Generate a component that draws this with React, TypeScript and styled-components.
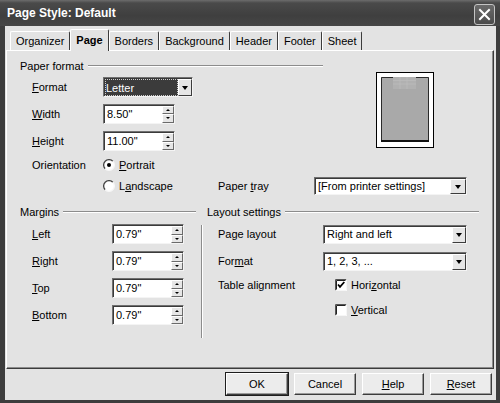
import React from 'react'
import styled, { createGlobalStyle } from 'styled-components'

const GlobalStyle = createGlobalStyle`
  html, body {
    margin: 0;
    padding: 0;
    background: #3d3d3d;
  }
  body {
    font-family: 'Liberation Sans', Arial, sans-serif;
    font-size: 11px;
    color: #000;
  }
  * {
    box-sizing: border-box;
  }
`

const Window = styled.div`
  width: 500px;
  height: 403px;
  display: flex;
  flex-direction: column;
  background: #3d3d3d;
`

const TitleBar = styled.div`
  height: 26px;
  flex: none;
  display: flex;
  align-items: center;
  justify-content: space-between;
  padding: 0 5px 0 7px;
  background: linear-gradient(to bottom, #6c6c6c 0, #4a4a4a 3px, #3f3f3f 60%, #464646 100%);
`

const Title = styled.span`
  font-family: 'Liberation Sans', Arial, sans-serif;
  font-weight: 700;
  font-size: 12px;
  color: #fff;
`

const CloseButton = styled.div`
  width: 21px;
  height: 21px;
  margin-top: 3px;
  border: 1px solid #c4c4c4;
  border-radius: 3px;
  background: linear-gradient(to bottom, #6a6a6a, #4c4c4c);
  display: flex;
  align-items: center;
  justify-content: center;
`

const Body = styled.div`
  flex: 1;
  display: flex;
  flex-direction: column;
  margin: 0 4px 3px 5px;
  background: #e3e3e3;
`

const TabStrip = styled.div`
  height: 24px;
  flex: none;
  display: flex;
  align-items: flex-end;
  padding-left: 5px;
  position: relative;
  z-index: 1;
`

const Tab = styled.div<{ $active?: boolean }>`
  height: ${(p) => (p.$active ? 22 : 19)}px;
  margin-bottom: ${(p) => (p.$active ? -1 : 0)}px;
  padding: 0 5px 1px;
  display: flex;
  align-items: center;
  font-weight: ${(p) => (p.$active ? 700 : 400)};
  background: #e3e3e3;
  border-top: 1px solid #fff;
  border-left: 1px solid #fff;
  border-right: 1px solid #3c3c3c;
  border-radius: 2px 2px 0 0;
  white-space: nowrap;
`

const Panel = styled.div`
  height: 319px;
  flex: none;
  margin: 0 2px 0 1px;
  padding: 8px 0 0 13px;
  border-top: 1px solid #fff;
  border-left: 1px solid #fff;
  border-right: 1px solid #3c3c3c;
  border-bottom: 1px solid #3c3c3c;
  box-shadow: inset -1px -1px 0 #8c8c8c;
`

const PaperTop = styled.div`
  display: flex;
  align-items: flex-start;
`

const Column = styled.div<{ $w: number }>`
  width: ${(p) => p.$w}px;
  flex: none;
  display: flex;
  flex-direction: column;
`

const GroupHeader = styled.div`
  height: 14px;
  display: flex;
  align-items: center;
  gap: 4px;
  white-space: nowrap;

  &::after {
    content: '';
    flex: 1;
    border-top: 1px solid #8c8c8c;
    border-bottom: 1px solid #fff;
  }
`

const Row = styled.div<{ $h?: number; $mt?: number; $indent?: number }>`
  display: flex;
  align-items: center;
  height: ${(p) => p.$h ?? 20}px;
  margin-top: ${(p) => p.$mt ?? 0}px;
  padding-left: ${(p) => p.$indent ?? 12}px;
`

const Label = styled.span<{ $w: number }>`
  width: ${(p) => p.$w}px;
  flex: none;
  white-space: nowrap;
`

const U = styled.span`
  text-decoration: underline;
  text-underline-offset: 1px;
`

const Field = styled.div<{ $w: number; $h?: number }>`
  width: ${(p) => p.$w}px;
  height: ${(p) => p.$h ?? 20}px;
  flex: none;
  display: flex;
  align-items: stretch;
  background: #fff;
  border: 1px solid;
  border-color: #707070 #f4f4f4 #f4f4f4 #707070;
  box-shadow: inset 1px 1px 0 #3a3a3a;
`

const FieldText = styled.div`
  flex: 1;
  display: flex;
  align-items: center;
  padding-left: 3px;
  color: #000;
  white-space: nowrap;
  overflow: hidden;
`

// the focused "Format" combo shows its value highlighted
const SelectedText = styled.div`
  flex: 1;
  display: flex;
  align-items: center;
  margin: 1px 0 0 1px;
  padding-left: 1px;
  background-color: #3b3b3b;
  outline: 1px dotted #cfcfcf;
  outline-offset: -1px;
  color: #ffffff;
  white-space: nowrap;
  overflow: hidden;
`

const DropButton = styled.div<{ $w?: number }>`
  width: ${(p) => p.$w ?? 14}px;
  flex: none;
  margin: 1px 0 0;
  display: flex;
  align-items: center;
  justify-content: center;
  background: #e6e6e6;
  border: 1px solid;
  border-color: #fff #3c3c3c #3c3c3c #fff;
`

const DownArrow = styled.span<{ $size?: number }>`
  width: 0;
  height: 0;
  border-left: ${(p) => p.$size ?? 3.5}px solid transparent;
  border-right: ${(p) => p.$size ?? 3.5}px solid transparent;
  border-top: ${(p) => (p.$size ?? 3.5) + 0.5}px solid #000;
`

const UpArrow = styled.span`
  width: 0;
  height: 0;
  border-left: 2px solid transparent;
  border-right: 2px solid transparent;
  border-bottom: 2px solid #000;
`

const Spin = styled.div`
  width: 12px;
  flex: none;
  margin-top: 1px;
  display: flex;
  flex-direction: column;
`

const SpinHalf = styled.div`
  flex: 1;
  display: flex;
  align-items: center;
  justify-content: center;
  background: #e6e6e6;
  border: 1px solid;
  border-color: #fff #6a6a6a #6a6a6a #fff;
`

const Option = styled.div<{ $w?: number }>`
  width: ${(p) => (p.$w ? `${p.$w}px` : 'auto')};
  flex: none;
  display: flex;
  align-items: center;
  gap: 4px;
  white-space: nowrap;
`

const Preview = styled.div`
  margin: 13px 0 0 53px;
  width: 58px;
  height: 76px;
  flex: none;
`

const Lower = styled.div`
  display: flex;
  align-items: flex-start;
  margin-top: 9px;
`

const Separator = styled.div`
  width: 2px;
  height: 113px;
  flex: none;
  margin: 20px 4px 0 5px;
  border-left: 1px solid #8c8c8c;
  border-right: 1px solid #fff;
`

const ButtonBar = styled.div`
  flex: 1;
  display: flex;
  justify-content: flex-end;
  align-items: flex-start;
  gap: 6px;
  padding: 4px 4px 0 0;
`

const Button = styled.button<{ $default?: boolean }>`
  width: 62px;
  height: 22px;
  padding: 0;
  font: inherit;
  color: #000;
  background: #ececec;
  border: 1px solid;
  border-color: #fff #3c3c3c #3c3c3c #fff;
  box-shadow: ${(p) =>
    p.$default ? '0 0 0 1px #1e1e1e, inset -1px -1px 0 #9a9a9a' : 'inset -1px -1px 0 #9a9a9a'};
`

const Radio = ({ checked }: { checked?: boolean }) => (
  <svg width="12" height="12" viewBox="0 0 12 12">
    <circle cx="6" cy="6" r="5.3" fill="#fff" />
    <path d="M2.2 9.8 A5.3 5.3 0 0 1 9.8 2.2" fill="none" stroke="#444" strokeWidth="1.3" />
    <path d="M9.8 2.2 A5.3 5.3 0 0 1 2.2 9.8" fill="none" stroke="#f6f6f6" strokeWidth="1.3" />
    {checked && <circle cx="6" cy="6" r="2" fill="#000" />}
  </svg>
)

const Checkbox = ({ checked }: { checked?: boolean }) => (
  <svg width="12" height="12" viewBox="0 0 12 12">
    <rect x="0" y="0" width="12" height="12" fill="#fff" />
    <path d="M0.5 11.5 V0.5 H11.5" fill="none" stroke="#555" />
    <path d="M1.5 10.5 V1.5 H10.5" fill="none" stroke="#222" />
    <path d="M11.5 0.5 V11.5 H0.5" fill="none" stroke="#f6f6f6" />
    {checked && <path d="M3 5.5 L5 7.8 L9.3 3" fill="none" stroke="#000" strokeWidth="1.8" />}
  </svg>
)

const PagePreview = () => (
  <svg width="58" height="76" viewBox="0 0 58 76">
    <rect x="0.5" y="0.5" width="57" height="75" fill="#fff" stroke="#000" />
    <rect x="5" y="5" width="48" height="65" fill="#a9a9a9" />
    <path d="M5.5 70 V5.5 H17 M40 5.5 H52.5 V70" fill="none" stroke="#2a2a2a" />
    <rect x="5" y="68" width="48" height="2" fill="#111" />
    <rect x="17" y="5" width="23" height="12" fill="#b1b1b1" />
    <path d="M17 8.5 H40 M17 12 H40 M24 5 V17 M31 5 V17" stroke="#bdbdbd" strokeWidth="0.7" />
  </svg>
)

const SpinField = ({ value, w = 72 }: { value: string; w?: number }) => (
  <Field $w={w}>
    <FieldText>{value}</FieldText>
    <Spin>
      <SpinHalf>
        <UpArrow />
      </SpinHalf>
      <SpinHalf>
        <DownArrow $size={2} />
      </SpinHalf>
    </Spin>
  </Field>
)

const Combo = ({
  value,
  w,
  h = 19,
  selected,
  btn,
}: {
  value: string
  w: number
  h?: number
  selected?: boolean
  btn?: number
}) => (
  <Field $w={w} $h={h}>
    {selected ? <SelectedText>{value}</SelectedText> : <FieldText>{value}</FieldText>}
    <DropButton $w={btn}>
      <DownArrow />
    </DropButton>
  </Field>
)

const tabs = ['Organizer', 'Page', 'Borders', 'Background', 'Header', 'Footer', 'Sheet']

const margins: { key: string; rest: string }[] = [
  { key: 'L', rest: 'eft' },
  { key: 'R', rest: 'ight' },
  { key: 'T', rest: 'op' },
  { key: 'B', rest: 'ottom' },
]

const App = () => {
  return (
    <>
      <GlobalStyle />
      <Window>
        <TitleBar>
          <Title>Page Style: Default</Title>
          <CloseButton>
            <svg width="13" height="13" viewBox="0 0 13 13">
              <path d="M2 2 L11 11 M11 2 L2 11" stroke="#fff" strokeWidth="2" strokeLinecap="square" />
            </svg>
          </CloseButton>
        </TitleBar>
        <Body>
          <TabStrip>
            {tabs.map((t) => (
              <Tab key={t} $active={t === 'Page'}>
                {t}
              </Tab>
            ))}
          </TabStrip>
          <Panel>
            <PaperTop>
              <Column $w={303}>
                <GroupHeader>Paper format</GroupHeader>
                <Row $mt={4}>
                  <Label $w={71}>
                    <U>F</U>ormat
                  </Label>
                  <Combo value="Letter" w={90} h={20} selected />
                </Row>
                <Row $mt={6} $h={21}>
                  <Label $w={71}>
                    <U>W</U>idth
                  </Label>
                  <SpinField value={'8.50"'} />
                </Row>
                <Row $mt={7}>
                  <Label $w={71}>
                    <U>H</U>eight
                  </Label>
                  <SpinField value={'11.00"'} />
                </Row>
              </Column>
              <Preview>
                <PagePreview />
              </Preview>
            </PaperTop>
            <Row $mt={4}>
              <Label $w={71}>Orientation</Label>
              <Option>
                <Radio checked />
                <span>
                  <U>P</U>ortrait
                </span>
              </Option>
            </Row>
            <Row $mt={1}>
              <Label $w={71} />
              <Option $w={115}>
                <Radio />
                <span>
                  L<U>a</U>ndscape
                </span>
              </Option>
              <Label $w={96}>
                Paper <U>t</U>ray
              </Label>
              <Combo value="[From printer settings]" w={153} h={18} btn={16} />
            </Row>
            <Lower>
              <Column $w={176}>
                <GroupHeader>Margins</GroupHeader>
                {margins.map((m, i) => (
                  <Row key={m.key} $mt={i === 0 ? 5 : 7}>
                    <Label $w={80}>
                      <U>{m.key}</U>
                      {m.rest}
                    </Label>
                    <SpinField value={'0.79"'} />
                  </Row>
                ))}
              </Column>
              <Separator />
              <Column $w={272}>
                <GroupHeader>Layout settings</GroupHeader>
                <Row $mt={5} $indent={11}>
                  <Label $w={105}>Page layout</Label>
                  <Combo value="Right and left" w={144} />
                </Row>
                <Row $mt={7} $indent={11}>
                  <Label $w={105}>
                    For<U>m</U>at
                  </Label>
                  <Combo value="1, 2, 3, ..." w={144} />
                </Row>
                <Row $mt={5} $h={18} $indent={11}>
                  <Label $w={117}>Table alignment</Label>
                  <Option>
                    <Checkbox checked />
                    <span>
                      Hori<U>z</U>ontal
                    </span>
                  </Option>
                </Row>
                <Row $mt={7} $h={18} $indent={11}>
                  <Label $w={117} />
                  <Option>
                    <Checkbox />
                    <span>
                      <U>V</U>ertical
                    </span>
                  </Option>
                </Row>
              </Column>
            </Lower>
          </Panel>
          <ButtonBar>
            <Button $default>OK</Button>
            <Button>Cancel</Button>
            <Button>
              <U>H</U>elp
            </Button>
            <Button>
              <U>R</U>eset
            </Button>
          </ButtonBar>
        </Body>
      </Window>
    </>
  )
}

export default App
